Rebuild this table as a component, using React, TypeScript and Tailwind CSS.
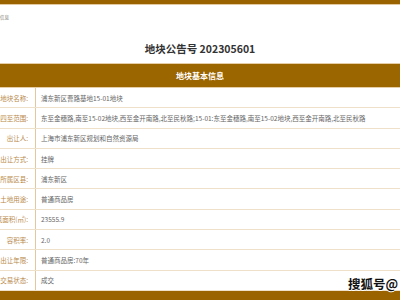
import React from "react";

const rows: [string, string][] = [
  ["地块名称:", "浦东新区曹路基地15-01地块"],
  ["四至范围:", "东至金穗路,南至15-02地块,西至金开南路,北至民秋路;15-01:东至金穗路,南至15-02地块,西至金开南路,北至民秋路"],
  ["出让人:", "上海市浦东新区规划和自然资源局"],
  ["出让方式:", "挂牌"],
  ["所属区县:", "浦东新区"],
  ["土地用途:", "普通商品房"],
  ["计容建筑面积(㎡):", "23555.9"],
  ["容积率:", "2.0"],
  ["出让年限:", "普通商品房:70年"],
  ["交易状态:", "成交"],
];

export default function App() {
  return (
    <div
      className="w-[400px] h-[300px] overflow-hidden bg-white relative flex flex-col"
      style={{ fontFamily: '"Noto Sans CJK SC", "Noto Sans", sans-serif' }}
    >
      <div className="h-[5px] shrink-0 bg-[#9a6300] border-b border-[#e3c9a0]" />
      <div className="h-[58px] shrink-0 flex flex-col">
        <div className="mt-[10px] h-[5px] text-[4.5px] leading-[5px] text-[#777] whitespace-nowrap">信息</div>
        <div className="mt-[22px] h-[14px] text-center text-[10.5px] leading-[14px] font-bold text-[#333]">
          地块公告号 202305601
        </div>
      </div>
      <div className="border-t border-[#e6cfa8] shrink-0" />
      <div className="h-[24px] shrink-0 bg-[#9b6500] border-b border-[#e6cfa8] flex items-center justify-center text-white font-bold text-[8px] leading-[10px]">
        地块基本信息
      </div>
      <div className="flex flex-col">
        {rows.map(([k, v], i) => (
          <div key={i} className="h-[20.3px] shrink-0 flex border-b border-[#eee0c9]">
            <div className="w-[36px] shrink-0 border-r border-[#e3c89e] overflow-hidden flex items-center justify-end pr-[7px]">
              <span className="whitespace-nowrap text-[6.5px] leading-[8px] text-[#b98a4c]">{k}</span>
            </div>
            <div className="flex-1 flex items-center pl-[5px] overflow-hidden">
              <span className="whitespace-nowrap text-[6.5px] leading-[8px] text-[#666]">{v}</span>
            </div>
          </div>
        ))}
      </div>
      <div className="flex-1 bg-[#9a6300]" />
      <div
        className="absolute left-[348px] top-[276px] text-[12.5px] leading-[15px] font-bold text-[#111] whitespace-nowrap"
        style={{ textShadow: "1px 0 #fff, -1px 0 #fff, 0 1px #fff, 0 -1px #fff" }}
      >
        搜狐号@
      </div>
    </div>
  );
}
